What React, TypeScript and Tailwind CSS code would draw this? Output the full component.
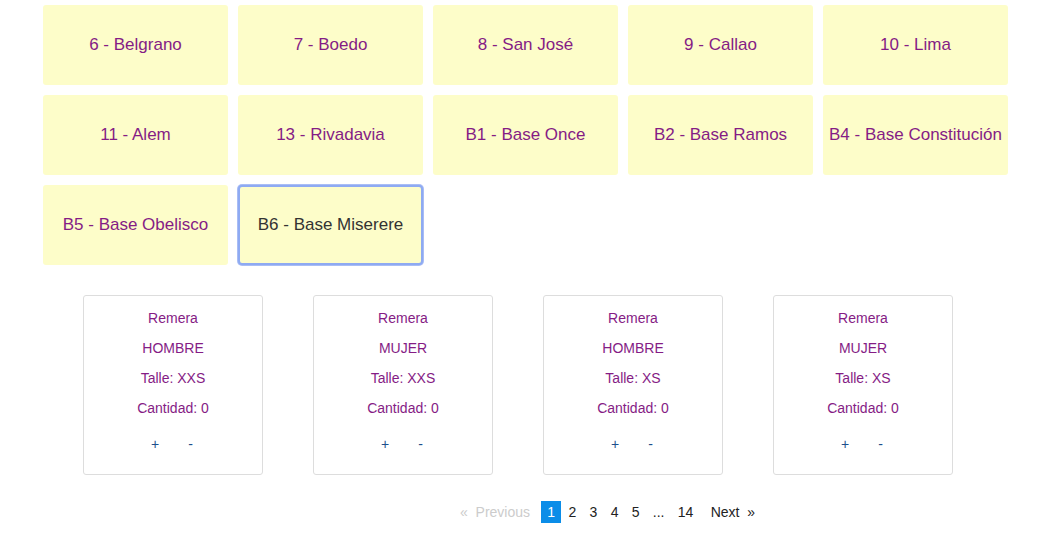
import React from "react";

const stations = [
  "6 - Belgrano",
  "7 - Boedo",
  "8 - San José",
  "9 - Callao",
  "10 - Lima",
  "11 - Alem",
  "13 - Rivadavia",
  "B1 - Base Once",
  "B2 - Base Ramos",
  "B4 - Base Constitución",
  "B5 - Base Obelisco",
  "B6 - Base Miserere",
];

const items = [
  { name: "Remera", genero: "HOMBRE", talle: "XXS", cantidad: 0 },
  { name: "Remera", genero: "MUJER", talle: "XXS", cantidad: 0 },
  { name: "Remera", genero: "HOMBRE", talle: "XS", cantidad: 0 },
  { name: "Remera", genero: "MUJER", talle: "XS", cantidad: 0 },
];

const App: React.FC = () => {
  const selected = "B6 - Base Miserere";
  return (
    <div
      className="w-[1042px] h-[545px] bg-white overflow-hidden"
      style={{ fontFamily: '"Liberation Sans", Arial, sans-serif' }}
    >
      <div className="pl-[43px] pt-[5px] grid grid-cols-[repeat(5,185px)] gap-[10px]">
        {stations.map((s) => (
          <button
            key={s}
            className={
              s === selected
                ? "h-[80px] rounded-[4px] bg-[#fdfdc9] border-2 border-[#8eaaf2] shadow-[0_0_0_1px_#a9bdf5] text-[#333333] text-[17px] whitespace-nowrap"
                : "h-[80px] rounded-[3px] bg-[#fdfdc9] text-[#851c85] text-[17px] whitespace-nowrap"
            }
          >
            {s}
          </button>
        ))}
      </div>

      <div className="pl-[83px] mt-[30px] flex gap-[50px]">
        {items.map((it, i) => (
          <div
            key={i}
            className="w-[180px] h-[180px] border border-[#dddddd] rounded-[3px] pt-[7px] flex flex-col items-center text-[14px] text-[#851c85]"
          >
            <div className="leading-[30px]">{it.name}</div>
            <div className="leading-[30px]">{it.genero}</div>
            <div className="leading-[30px]">Talle: {it.talle}</div>
            <div className="leading-[30px]">Cantidad: {it.cantidad}</div>
            <div className="mt-[6px] mr-[2px] leading-[30px] flex gap-[29px] text-[#1d4f8c]">
              <span>+</span>
              <span>-</span>
            </div>
          </div>
        ))}
      </div>

      <div className="pl-[454px] mt-[26px] flex items-center gap-[1.3px] text-[14px] text-[#222222]">
        <span className="px-[6px] leading-[22px] text-[#cccccc]">«&nbsp;&nbsp;Previous</span>
        <span className="ml-[4px] px-[6px] leading-[22px] bg-[#0b8de8] text-white">1</span>
        <span className="px-[6px] leading-[22px]">2</span>
        <span className="px-[6px] leading-[22px]">3</span>
        <span className="px-[6px] leading-[22px]">4</span>
        <span className="px-[6px] leading-[22px]">5</span>
        <span className="px-[6px] leading-[22px]">...</span>
        <span className="px-[6px] leading-[22px]">14</span>
        <span className="ml-[4px] px-[6px] leading-[22px]">Next&nbsp;&nbsp;»</span>
      </div>
    </div>
  );
};

export default App;
